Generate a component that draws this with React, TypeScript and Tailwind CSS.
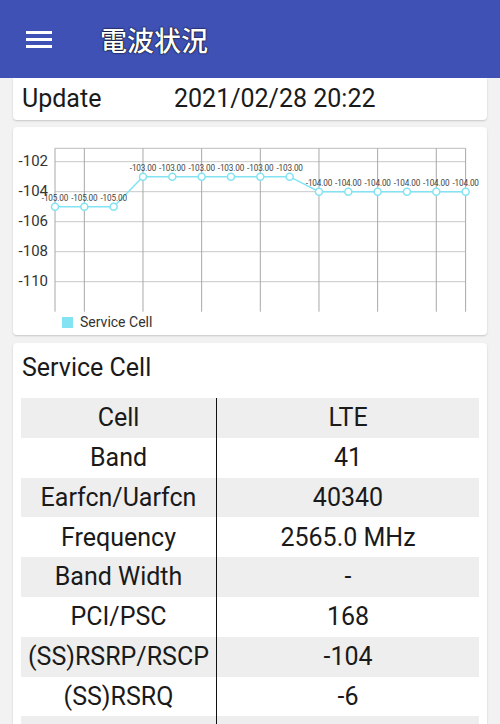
import React from "react";

const values = [-105, -105, -105, -103, -103, -103, -103, -103, -103, -104, -104, -104, -104, -104, -104];

const rows: [string, string][] = [
  ["Cell", "LTE"],
  ["Band", "41"],
  ["Earfcn/Uarfcn", "40340"],
  ["Frequency", "2565.0 MHz"],
  ["Band Width", "-"],
  ["PCI/PSC", "168"],
  ["(SS)RSRP/RSCP", "-104"],
  ["(SS)RSRQ", "-6"],
  ["(SS)SINR", "-"],
];

// chart coords are local to the card (card origin at page x=13, y=127)
const px = (i: number) => 42 + i * 29.33;
const py = (v: number) => 64.7 - (v + 104) * 15;

function SignalChart() {
  const gridY = [-102, -104, -106, -108, -110];
  const gridX = [0, 1, 3, 5, 7, 9, 11, 13, 14];
  const left = px(0);
  const right = px(14);
  const top = 21.3;
  const bottom = 184.7;
  const points = values.map((v, i) => `${px(i)},${py(v)}`).join(" ");

  return (
    <svg width="474" height="208" viewBox="0 0 474 208" className="block">
      <line x1={left} y1={top} x2={right} y2={top} stroke="#bdbdbd" strokeWidth="1" />
      {gridY.map((v) => (
        <line key={v} x1={left} y1={py(v)} x2={right} y2={py(v)} stroke="#c8c8c8" strokeWidth="1" />
      ))}
      {gridX.map((i) => (
        <line key={i} x1={px(i)} y1={top} x2={px(i)} y2={bottom} stroke="#a8a8a8" strokeWidth="1" />
      ))}
      {gridY.map((v) => (
        <text
          key={v}
          x="35"
          y={py(v) + 4}
          textAnchor="end"
          fontSize="15"
          fill="#333"
          fontFamily="Roboto, sans-serif"
        >
          {v}
        </text>
      ))}
      <polyline points={points} fill="none" stroke="#84e3f2" strokeWidth="1.5" />
      {values.map((v, i) => (
        <g key={i}>
          <circle cx={px(i)} cy={py(v)} r="3.5" fill="#fff" stroke="#84e3f2" strokeWidth="1.5" />
          <text
            x={px(i)}
            y={py(v) - 5.5}
            textAnchor="middle"
            fontSize="8.2"
            letterSpacing="-0.15"
            fill="#444"
            fontFamily="Roboto, sans-serif"
          >
            {v.toFixed(2)}
          </text>
        </g>
      ))}
      <rect x="49" y="190" width="11" height="11" fill="#84e3f2" />
      <text x="67" y="200" fontSize="14" fill="#333" fontFamily="Roboto, sans-serif">
        Service Cell
      </text>
    </svg>
  );
}

export default function App() {
  return (
    <div className="w-[500px] h-[724px] overflow-hidden bg-[#f2f2f2] font-['Roboto','Noto_Sans_CJK_JP',sans-serif] text-[#1a1a1a]">
      {/* Toolbar */}
      <header className="h-[78px] bg-[#3f51b5] flex items-center relative z-10">
        <div className="ml-[26px] flex flex-col gap-[4px]">
          <span className="block w-[26px] h-[3px] bg-white" />
          <span className="block w-[26px] h-[3px] bg-white" />
          <span className="block w-[26px] h-[3px] bg-white" />
        </div>
        <h1 className="ml-[48px] text-[27px] font-medium text-white leading-none [text-shadow:0_0_2px_#000,0_0_1px_#000] font-['Noto_Sans_CJK_JP',sans-serif]">
          電波状況
        </h1>
      </header>

      <main className="px-[13px] flex flex-col">
        {/* Update */}
        <div className="h-[42px] bg-white rounded-b-[4px] shadow-[0_1px_2px_rgba(0,0,0,0.18)] flex items-center text-[25px]">
          <span className="ml-[9px] w-[152px]">Update</span>
          <span>2021/02/28 20:22</span>
        </div>

        {/* Chart */}
        <div className="mt-[7px] h-[208px] bg-white rounded-[4px] shadow-[0_1px_2px_rgba(0,0,0,0.18)]">
          <SignalChart />
        </div>

        {/* Service Cell */}
        <div className="mt-[8px] bg-white rounded-t-[4px] shadow-[0_1px_2px_rgba(0,0,0,0.18)] px-[8px] pt-[7px] pb-4">
          <h2 className="pl-[1px] h-[36px] leading-[36px] text-[25px]">Service Cell</h2>
          <div className="mt-[12px] flex flex-col text-[25px]">
            {rows.map(([k, v], i) => (
              <div
                key={k}
                className={`flex h-[39.8px] items-center ${i % 2 === 0 ? "bg-[#eeeeee]" : "bg-white"}`}
              >
                <div className="w-[196px] h-full flex items-center justify-center border-r-[1.5px] border-[#111]">
                  {k}
                </div>
                <div className="flex-1 text-center">{v}</div>
              </div>
            ))}
          </div>
        </div>
      </main>
    </div>
  );
}
